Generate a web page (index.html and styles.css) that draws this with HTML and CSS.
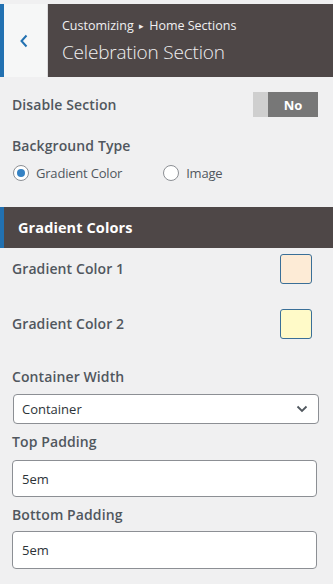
FILE: index.html
```html
<!DOCTYPE html>
<html>
<head>
<meta charset="utf-8">
<link rel="stylesheet" href="styles.css">
</head>
<body>
<div class="panel">
  <div class="header">
    <div class="back">
      <svg width="10" height="14" viewBox="0 0 10 14"><path d="M7.5 1.5 L2.5 7 L7.5 12.5" fill="none" stroke="#2271b1" stroke-width="2"/></svg>
    </div>
    <div class="titles">
      <div class="crumb">Customizing <span class="tri">▸</span> Home Sections</div>
      <div class="title">Celebration Section</div>
    </div>
  </div>

  <div class="row disable">
    <span class="label">Disable Section</span>
    <div class="toggle"><span class="knob"></span><span class="state">No</span></div>
  </div>

  <div class="block bgtype">
    <div class="label">Background Type</div>
    <div class="radios">
      <label class="radio"><span class="circle checked"></span>Gradient Color</label>
      <label class="radio second"><span class="circle"></span>Image</label>
    </div>
  </div>

  <div class="section-head">Gradient Colors</div>

  <div class="row color first">
    <span class="label">Gradient Color 1</span>
    <span class="swatch peach"></span>
  </div>
  <div class="row color">
    <span class="label">Gradient Color 2</span>
    <span class="swatch lemon"></span>
  </div>

  <div class="block width">
    <div class="label">Container Width</div>
    <div class="select">Container
      <svg width="12" height="8" viewBox="0 0 12 8"><path d="M1.5 1.5 L6 6 L10.5 1.5" fill="none" stroke="#50575e" stroke-width="1.8"/></svg>
    </div>
  </div>

  <div class="block pad">
    <div class="label">Top Padding</div>
    <div class="input">5em</div>
  </div>

  <div class="block pad second-pad">
    <div class="label">Bottom Padding</div>
    <div class="input tall">5em</div>
  </div>
</div>
</body>
</html>
```

FILE: styles.css
```css
* { box-sizing: border-box; }
html, body { margin: 0; padding: 0; }
body {
  background: #f0f0f1;
  font-family: "Open Sans", "Noto Sans", sans-serif;
  color: #50575e;
  width: 333px;
  height: 584px;
  overflow: hidden;
}
.panel { padding-top: 4px; }

.header {
  display: flex;
  height: 73px;
}
.back {
  width: 48px;
  background: #f6f7f7;
  border-left: 4px solid #2271b1;
  border-right: 1px solid #dcdcde;
  display: flex;
  align-items: center;
  justify-content: center;
  padding-right: 4px;
}
.titles {
  flex: 1;
  background: #4e4747;
  color: #f0f0f1;
  padding: 13px 0 0 14px;
}
.crumb {
  font-size: 12.5px;
  line-height: 18px;
}
.tri { font-size: 9px; position: relative; top: -1px; padding: 0 2px; }
.title {
  font-size: 19px;
  font-weight: 300;
  line-height: 28px;
  margin-top: 2px;
  letter-spacing: -0.2px;
}

.label {
  font-size: 14px;
  font-weight: 600;
  line-height: 24px;
  color: #50575e;
  letter-spacing: 0.1px;
}

.row {
  display: flex;
  align-items: center;
  justify-content: space-between;
  padding: 0 21px 0 12px;
}
.disable { margin-top: 15px; height: 25px; padding-right: 15px; }
.toggle {
  display: flex;
  width: 65px;
  height: 25px;
}
.knob { width: 15px; background: #cfcfcf; }
.state {
  flex: 1;
  background: #777;
  color: #fff;
  font-weight: 700;
  font-size: 13px;
  display: flex;
  align-items: center;
  justify-content: center;
}

.block { padding: 0 14px 0 12px; }
.bgtype { margin-top: 17px; }
.radios { display: flex; margin-top: 5px; height: 20px; align-items: center; }
.radio {
  display: flex;
  align-items: center;
  font-size: 13px;
  color: #50575e;
  letter-spacing: -0.2px;
}
.radio.second { margin-left: 40px; }
.circle {
  width: 16px;
  height: 16px;
  border-radius: 50%;
  border: 1px solid #8c8f94;
  background: #fff;
  margin: 0 7px 0 1px;
  display: flex;
  align-items: center;
  justify-content: center;
}
.circle.checked::after {
  content: "";
  width: 8px;
  height: 8px;
  border-radius: 50%;
  background: #3582c4;
}

.section-head {
  margin-top: 24px;
  height: 41px;
  background: #4e4747;
  border-left: 4px solid #2271b1;
  color: #fff;
  font-weight: 700;
  font-size: 14.5px;
  display: flex;
  align-items: center;
  padding-left: 14px;
  letter-spacing: 0.1px;
}

.color { height: 30px; margin-top: 25px; }
.color.first { margin-top: 6px; }
.swatch {
  width: 32px;
  height: 30px;
  border: 1px solid #3a6f98;
  border-radius: 3px;
}
.peach { background: #fdebd6; }
.lemon { background: #fffac8; }

.width { margin-top: 26px; }
.select {
  margin: 5px 0 0 1px;
  height: 30px;
  border: 1px solid #8c8f94;
  border-radius: 4px;
  background: #fff;
  display: flex;
  align-items: center;
  justify-content: space-between;
  padding: 0 10px 0 8px;
  font-size: 13px;
  color: #2c3338;
}
.pad { margin-top: 6px; }
.input {
  margin-top: 6px;
  margin-right: 2px;
  height: 37px;
  border: 1px solid #8c8f94;
  border-radius: 4px;
  background: #fff;
  display: flex;
  align-items: center;
  padding-left: 9px;
  font-size: 13px;
  color: #2c3338;
}
.second-pad { margin-top: 6px; }
.input.tall { height: 38px; margin-top: 4px; }
```
